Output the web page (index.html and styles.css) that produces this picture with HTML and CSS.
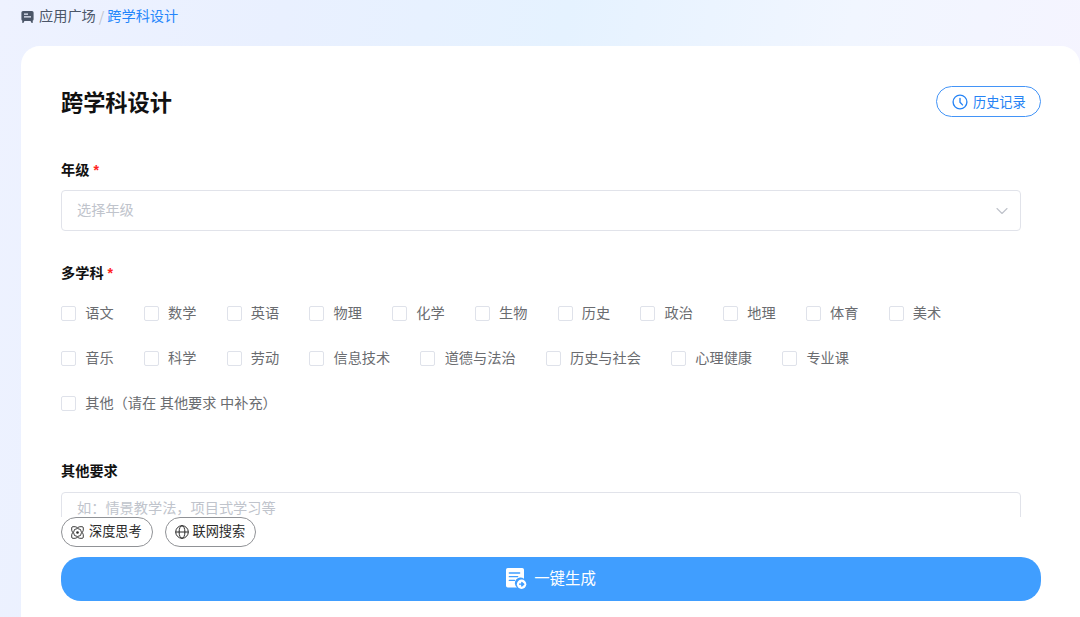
FILE: index.html
```html
<!DOCTYPE html>
<html lang="zh-CN">
<head>
<meta charset="utf-8">
<title>跨学科设计</title>
<link rel="stylesheet" href="styles.css">
</head>
<body>
<nav class="breadcrumb">
  <svg class="crumb-icon" width="13" height="12" viewBox="0 0 13 12"><path fill="#4b5668" fill-rule="evenodd" d="M2 0h9a1.6 1.6 0 0 1 1.6 1.6v6.600A1.6 1.6 0 0 1 11.600 9.700l.4 2.100h-1.700L9.600 10H3.400L2.700 11.800H1l.4-2.100A1.600 1.600 0 0 1 .4 8.200V1.600A1.600 1.600 0 0 1 2 0zM3 2.500v1.200h4V2.500zM3 5.200v1.200h7V5.200z"/></svg>
  <span class="crumb">应用广场</span><span class="slash">/</span><span class="crumb current">跨学科设计</span>
</nav>
<main class="panel">
  <header class="panel-head">
    <h1 class="title">跨学科设计</h1>
    <button class="history">
      <svg width="16" height="16" viewBox="0 0 16 16" fill="none" stroke="currentColor" stroke-width="1.35" stroke-linecap="round" stroke-linejoin="round"><circle cx="8" cy="8" r="6.900"/><path d="M8 4.300V8.200l2.500 2.700"/></svg>
      <span>历史记录</span>
    </button>
  </header>
  <section class="form">
    <div class="label">年级<span class="required">*</span></div>
    <div class="select"><span class="placeholder">选择年级</span>
      <svg width="12" height="8" viewBox="0 0 12 8" fill="none" stroke="#bfc2ca" stroke-width="1.100" stroke-linecap="round" stroke-linejoin="round"><path d="M1 1.500l5 5 5-5"/></svg>
    </div>
    <div class="label label-subjects">多学科<span class="required">*</span></div>
    <div class="checks">
      <div class="check-row">
        <label class="check"><i class="box"></i><span>语文</span></label><label class="check"><i class="box"></i><span>数学</span></label><label class="check"><i class="box"></i><span>英语</span></label><label class="check"><i class="box"></i><span>物理</span></label><label class="check"><i class="box"></i><span>化学</span></label><label class="check"><i class="box"></i><span>生物</span></label><label class="check"><i class="box"></i><span>历史</span></label><label class="check"><i class="box"></i><span>政治</span></label><label class="check"><i class="box"></i><span>地理</span></label><label class="check"><i class="box"></i><span>体育</span></label><label class="check"><i class="box"></i><span>美术</span></label>
      </div>
      <div class="check-row">
        <label class="check"><i class="box"></i><span>音乐</span></label><label class="check"><i class="box"></i><span>科学</span></label><label class="check"><i class="box"></i><span>劳动</span></label><label class="check"><i class="box"></i><span>信息技术</span></label><label class="check"><i class="box"></i><span>道德与法治</span></label><label class="check"><i class="box"></i><span>历史与社会</span></label><label class="check"><i class="box"></i><span>心理健康</span></label><label class="check"><i class="box"></i><span>专业课</span></label>
      </div>
      <div class="check-row">
        <label class="check"><i class="box"></i><span>其他（请在 其他要求 中补充）</span></label>
      </div>
    </div>
    <div class="label label-other">其他要求</div>
    <div class="textarea">如：情景教学法，项目式学习等</div>
  </section>
  <footer class="actions">
    <div class="toggles">
      <button class="pill pill-think">
        <svg width="13" height="13" viewBox="0 0 13 13" fill="none" stroke="currentColor" stroke-width=".9"><path d="M1.900.7h2.300l2.300.9L8.800.7h2.300a1.200 1.200 0 0 1 1.200 1.200v2.300l-.9 2.300.9 2.300v2.300a1.200 1.200 0 0 1-1.200 1.200H8.800l-2.300-.9-2.300.9H1.900A1.200 1.200 0 0 1 .7 11.100V8.800l.9-2.300L.7 4.200V1.900A1.200 1.200 0 0 1 1.900.7z"/><circle cx="6.500" cy="6.500" r="4"/><circle cx="6.500" cy="6.500" r="1.300" fill="currentColor" stroke="none"/></svg>
        <span>深度思考</span>
      </button>
      <button class="pill pill-web">
        <svg width="14" height="14" viewBox="0 0 14 14" fill="none" stroke="currentColor" stroke-width="1"><circle cx="7" cy="7" r="6.300"/><ellipse cx="7" cy="7" rx="2.900" ry="6.300"/><path d="M.7 7h12.600"/></svg>
        <span>联网搜索</span>
      </button>
    </div>
    <button class="generate">
      <svg width="21" height="22" viewBox="0 0 21 22"><path fill="#fff" d="M1.800 0h14.400A1.800 1.800 0 0 1 18 1.800v8.900a5.600 5.600 0 0 0-7 8.800H1.800A1.800 1.800 0 0 1 0 17.700V1.800A1.800 1.800 0 0 1 1.800 0z"/><path stroke="#409eff" stroke-width="1.300" stroke-linecap="round" d="M3.300 5h10.400M3.300 8.700h8.400M3.300 12.400h5.200"/><circle cx="15.600" cy="16.200" r="4.700" fill="#fff"/><path stroke="#409eff" stroke-width="1.300" fill="#409eff" stroke-linejoin="round" d="M13 16.200h4M15.800 14.400l2 1.800-2 1.800z"/></svg>
      <span>一键生成</span>
    </button>
  </footer>
</main>
</body>
</html>
```
FILE: styles.css
```css
* { box-sizing: border-box; }
body {
  margin: 0;
  width: 1080px;
  height: 617px;
  overflow: hidden;
  font-family: "Noto Sans CJK SC", sans-serif;
  font-size: 14.2px;
  color: #6a6c70;
  background: linear-gradient(100deg, #eef2ff 0%, #e9f0ff 24%, #e5f2ff 48%, #f1f6ff 72%, #f5f4ff 94%, #f5f4ff 100%);
}
button { font: inherit; background: none; border: 0; padding: 0; margin: 0; }
svg { display: block; flex: none; overflow: visible; }
.breadcrumb { display: flex; align-items: center; height: 46px; padding: 0 0 13px 21px; }
.crumb-icon { margin-right: 5px; }
.crumb { padding-bottom: 3px; color: #4b5668; line-height: 20px; }
.slash { width: 11.500px; padding-bottom: 2px; text-align: center; color: #c0c4cc; line-height: 20px; }
.crumb.current { color: #2486fb; }
.panel {
  margin-left: 21px;
  height: 571px;
  padding: 40px 39px 0 40px;
  background: #fff;
  border-radius: 19px 19px 0 0;
}
.panel-head { display: flex; justify-content: space-between; align-items: center; height: 31px; }
.title { margin: 0; font-size: 22.200px; font-weight: 700; line-height: 31px; color: #111; }
.history {
  display: flex;
  align-items: center;
  gap: 5px;
  width: 105px;
  height: 31px;
  padding-left: 15px;
  border: 1px solid #4394f7;
  border-radius: 16px;
  color: #2583f5;
  font-size: 13.200px;
}
.form { width: 960px; height: 400px; padding-top: 42px; overflow: hidden; }
.label { height: 20px; line-height: 20px; font-weight: 700; color: #111; }
.required { margin-left: 4px; color: #f22; font-weight: 700; font-family: "Liberation Sans", sans-serif; }
.select {
  display: flex;
  align-items: center;
  justify-content: space-between;
  height: 41px;
  margin-top: 11px;
  padding: 0 12px 0 15px;
  border: 1px solid #e1e3ea;
  border-radius: 4px;
  color: #c0c4cc;
}
.placeholder { padding-bottom: 3px; }
.label-subjects { margin-top: 30.500px; }
.checks { margin-top: 9.500px; }
.check-row { display: flex; gap: 30.200px; height: 45.200px; }
.check { display: flex; align-items: center; gap: 9.200px; height: 45.200px; white-space: nowrap; word-spacing: .4px; }
.check span { padding-bottom: 3px; }
.box { width: 15px; height: 15px; border: 1px solid #dfe2ea; border-radius: 2px; background: #fff; }
.label-other { margin-top: 33.400px; }
.textarea {
  height: 60px;
  margin-top: 11.900px;
  padding: 4px 15px;
  border: 1px solid #e1e3ea;
  border-radius: 4px;
  color: #c0c4cc;
  line-height: 20px;
}
.toggles { display: flex; gap: 12px; }
.pill {
  display: flex;
  align-items: center;
  height: 30px;
  border: 1px solid #909296;
  border-radius: 15px;
  color: #2b2b2b;
  font-size: 13.200px;
}
.pill span { padding-bottom: 3px; }
.pill-think { width: 92px; padding-left: 9px; gap: 5px; }
.pill-web { width: 91px; padding-left: 8.500px; gap: 4px; }
.generate {
  display: flex;
  align-items: center;
  justify-content: center;
  gap: 7px;
  width: 980px;
  height: 44px;
  margin-top: 10px;
  border-radius: 20px;
  background: #409eff;
  color: #fff;
  font-size: 15.400px;
}
.generate span { padding-bottom: 4px; }
```
